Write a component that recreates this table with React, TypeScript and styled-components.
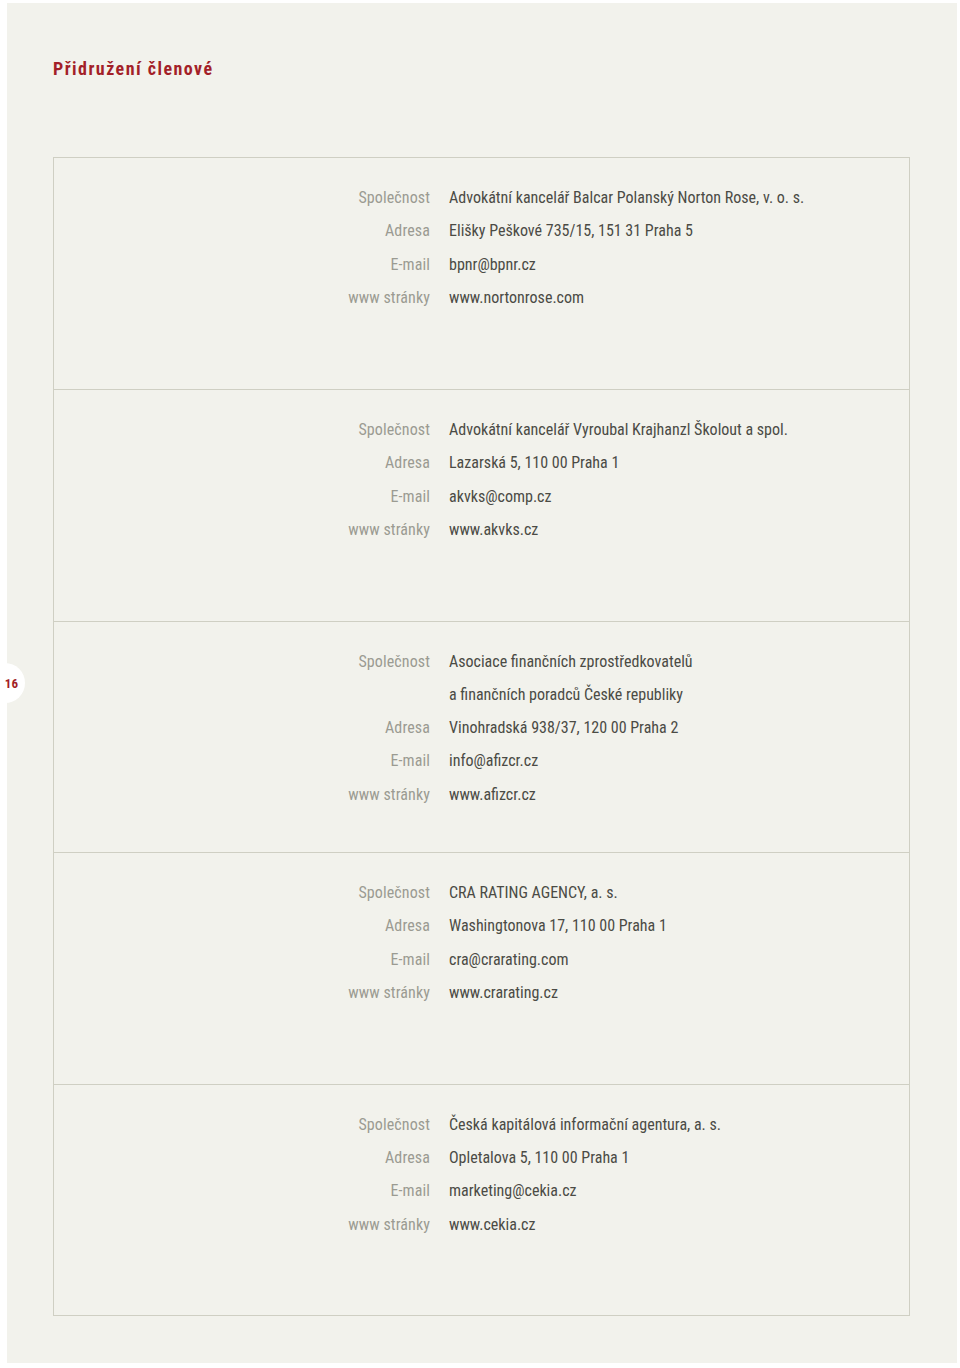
import React from "react";
import styled, { createGlobalStyle } from "styled-components";

const GlobalStyle = createGlobalStyle`
  html, body { margin: 0; padding: 0; background: #ffffff; }
  body { font-family: "Roboto Condensed", "Liberation Sans", sans-serif; }
`;

const Sheet = styled.div`
  position: relative;
  margin: 3px 0 0 7px;
  width: 950px;
  height: 1360px;
  background: #f2f2ec;
  box-sizing: border-box;
  padding: 56px 0 0 46px;
`;

const Title = styled.h1`
  margin: 0;
  font-family: "Roboto Condensed", "Liberation Sans", sans-serif;
  font-weight: 700;
  font-size: 18px;
  line-height: 20px;
  letter-spacing: 1.45px;
  color: #a31f28;
`;

const PageBadge = styled.div`
  position: absolute;
  left: -22px;
  top: 660px;
  width: 40px;
  height: 40px;
  border-radius: 50%;
  background: #ffffff;
  display: flex;
  align-items: center;
  justify-content: flex-end;
  padding-right: 7px;
  box-sizing: border-box;
  font-family: "Roboto Condensed", sans-serif;
  font-weight: 700;
  font-size: 13px;
  color: #a31f28;
`;

const Table = styled.div`
  margin-top: 78px;
  width: 857px;
  border: 1px solid #cfcfc3;
  box-sizing: border-box;
`;

const Entry = styled.div<{ first?: boolean }>`
  height: ${(p) => (p.first ? "231px" : "231.6px")};
  box-sizing: border-box;
  padding-top: 23px;
  border-top: ${(p) => (p.first ? "none" : "1px solid #cfcfc3")};
  display: grid;
  grid-template-columns: 376px 1fr;
  column-gap: 19px;
  align-content: start;
  font-size: 16px;
  line-height: 33.3px;
`;

const Label = styled.div`
  text-align: right;
  color: #9b9b92;
  letter-spacing: 0.1px;
`;

const Value = styled.div`
  color: #4b4b45;
`;

type Row = [string, string[]];
const entries: Row[][] = [
  [
    ["Společnost", ["Advokátní kancelář Balcar Polanský Norton Rose, v. o. s."]],
    ["Adresa", ["Elišky Peškové 735/15, 151 31 Praha 5"]],
    ["E-mail", ["bpnr@bpnr.cz"]],
    ["www stránky", ["www.nortonrose.com"]],
  ],
  [
    ["Společnost", ["Advokátní kancelář Vyroubal Krajhanzl Školout a spol."]],
    ["Adresa", ["Lazarská 5, 110 00 Praha 1"]],
    ["E-mail", ["akvks@comp.cz"]],
    ["www stránky", ["www.akvks.cz"]],
  ],
  [
    ["Společnost", ["Asociace finančních zprostředkovatelů", "a finančních poradců České republiky"]],
    ["Adresa", ["Vinohradská 938/37, 120 00 Praha 2"]],
    ["E-mail", ["info@afizcr.cz"]],
    ["www stránky", ["www.afizcr.cz"]],
  ],
  [
    ["Společnost", ["CRA RATING AGENCY, a. s."]],
    ["Adresa", ["Washingtonova 17, 110 00 Praha 1"]],
    ["E-mail", ["cra@crarating.com"]],
    ["www stránky", ["www.crarating.cz"]],
  ],
  [
    ["Společnost", ["Česká kapitálová informační agentura, a. s."]],
    ["Adresa", ["Opletalova 5, 110 00 Praha 1"]],
    ["E-mail", ["marketing@cekia.cz"]],
    ["www stránky", ["www.cekia.cz"]],
  ],
];

export default function App() {
  return (
    <>
      <GlobalStyle />
      <Sheet>
        <Title>Přidružení členové</Title>
        <PageBadge>16</PageBadge>
        <Table>
          {entries.map((rows, i) => (
            <Entry key={i} first={i === 0}>
              {rows.map(([label, values]) => (
                <React.Fragment key={label}>
                  <Label>{label}</Label>
                  <Value>
                    {values.map((v) => (
                      <div key={v}>{v}</div>
                    ))}
                  </Value>
                </React.Fragment>
              ))}
            </Entry>
          ))}
        </Table>
      </Sheet>
    </>
  );
}
